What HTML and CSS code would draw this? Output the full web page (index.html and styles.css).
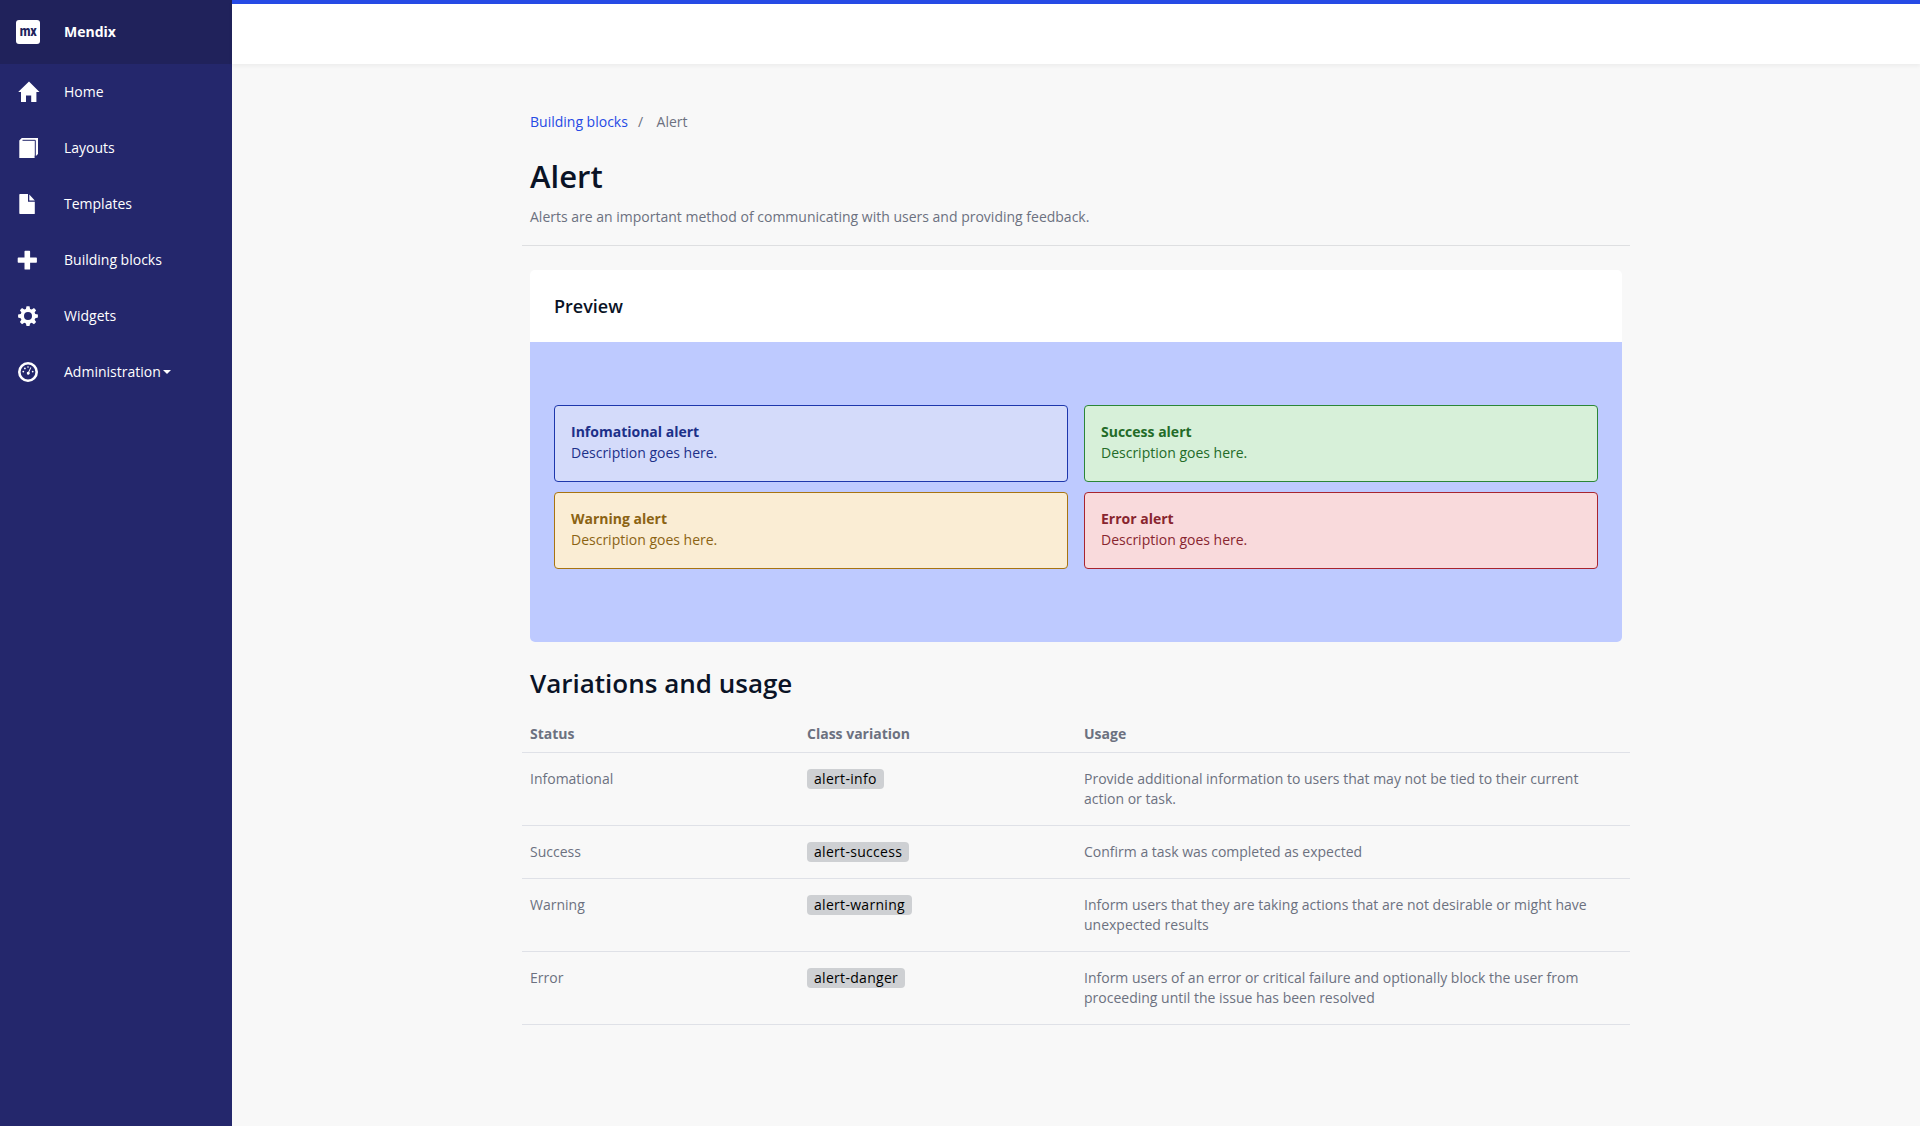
FILE: index.html
```html
<!DOCTYPE html>
<html lang="en">
<head>
<meta charset="utf-8">
<title>Alert</title>
<link rel="stylesheet" href="styles.css">
</head>
<body>
<div class="layout">
  <aside class="sidebar">
    <div class="brand">
      <span class="brand-logo">mx</span>
      <span class="brand-name">Mendix</span>
    </div>
    <nav class="nav">
      <a class="nav-item"><svg class="icon" viewBox="0 0 24 24"><path d="M13 1.400 2.200 12H5v10h5v-6.500h5.200V22h5.200V12h3.100z"/></svg><span>Home</span></a>
      <a class="nav-item"><svg class="icon" viewBox="0 0 24 24"><path d="M3.300 4.500 5.800 2H22v16l-1.800 1.800h-1.600V22H3.300z"/><path class="icon-line" d="M6.500 4.300h12.800v16"/></svg><span>Layouts</span></a>
      <a class="nav-item"><svg class="icon" viewBox="0 0 24 24"><path d="M4 2h8v7.800h6.800v11.600q0 .6-.6.600H4q-.7 0-.7-.7V2.700Q3.300 2 4 2z M13.300 2.500 18.800 8.500h-5.500z"/></svg><span>Templates</span></a>
      <a class="nav-item"><svg class="icon" viewBox="-.7 -.5 24 24"><path d="M8.500 2.300h4.200q.7 0 .7.700v6.100h6.100q.7 0 .7.700v3.800q0 .7-.7.700h-6.100v6.100q0 .7-.7.700H8.500q-.7 0-.7-.7v-6.100H1.700q-.7 0-.7-.7V9.800q0-.7.7-.7h6.100V3q0-.7.700-.7z"/></svg><span>Building blocks</span></a>
      <a class="nav-item"><svg class="icon" viewBox="0 0 24 24"><path fill-rule="evenodd" d="m10.500 2.300h3l.6 2.600 1.600.7 2.300-1.500 2.100 2.100-1.500 2.300.7 1.600 2.600.5v3l-2.600.6-.7 1.600 1.500 2.300-2.100 2.100-2.300-1.500-1.600.7-.6 2.600h-3l-.6-2.600-1.600-.7L6 20.200l-2.100-2.100 1.500-2.300-.7-1.600-2.600-.6v-3l2.600-.5.700-1.600-1.500-2.300L6 4.100l2.300 1.500 1.600-.7zM12 8.100a4 4 0 1 0 0 8 4 4 0 0 0 0-8z"/></svg><span>Widgets</span></a>
      <a class="nav-item"><svg class="icon" viewBox="0 0 24 24"><path fill-rule="evenodd" d="M12 2a10 10 0 1 0 0 20 10 10 0 0 0 0-20zm0 2.600a7.400 7.400 0 1 1 0 14.800 7.400 7.400 0 0 1 0-14.800z"/><path d="m14.500 7.200.8.400-2 4.500a1.500 1.500 0 1 1-1-.4z"/><circle cx="7.300" cy="11.600" r=".9"/><circle cx="8.900" cy="8.400" r=".9"/><circle cx="12" cy="7" r=".8"/><circle cx="16.700" cy="11.600" r=".9"/></svg><span>Administration</span><i class="caret"></i></a>
    </nav>
  </aside>
  <div class="main">
    <header class="topbar"></header>
    <main class="content">
      <div class="breadcrumb"><a class="crumb-link">Building blocks</a><span class="crumb-sep">/</span><span>Alert</span></div>
      <h1 class="title">Alert</h1>
      <p class="lead">Alerts are an important method of communicating with users and providing feedback.</p>
      <section class="card">
        <h3 class="card-title">Preview</h3>
        <div class="preview">
          <div class="alert alert-info"><strong>Infomational alert</strong><p>Description goes here.</p></div>
          <div class="alert alert-success"><strong>Success alert</strong><p>Description goes here.</p></div>
          <div class="alert alert-warning"><strong>Warning alert</strong><p>Description goes here.</p></div>
          <div class="alert alert-danger"><strong>Error alert</strong><p>Description goes here.</p></div>
        </div>
      </section>
      <h2 class="subtitle">Variations and usage</h2>
      <div class="table">
        <div class="row head"><span>Status</span><span>Class variation</span><span>Usage</span></div>
        <div class="row"><span>Infomational</span><span><code class="tag">alert-info</code></span><span>Provide additional information to users that may not be tied to their current action or task.</span></div>
        <div class="row"><span>Success</span><span><code class="tag">alert-success</code></span><span>Confirm a task was completed as expected</span></div>
        <div class="row"><span>Warning</span><span><code class="tag">alert-warning</code></span><span>Inform users that they are taking actions that are not desirable or might have unexpected results</span></div>
        <div class="row"><span>Error</span><span><code class="tag">alert-danger</code></span><span>Inform users of an error or critical failure and optionally block the user from proceeding until the issue has been resolved</span></div>
      </div>
    </main>
  </div>
</div>
</body>
</html>
```
FILE: styles.css
```css
* { box-sizing: border-box; }
body {
  margin: 0;
  background: #f8f8f8;
  color: #6c7180;
  font: 14px/20px "Open Sans", sans-serif;
}
h1, h2, h3, p { margin: 0; }
.layout { display: flex; min-height: 1126px; }

.sidebar { width: 232px; background: #24276c; color: #fff; }
.brand {
  display: flex;
  align-items: center;
  gap: 24px;
  height: 64px;
  padding-left: 16px;
  background: #20225b;
  font-weight: 700;
}
.brand-logo {
  width: 24px;
  height: 24px;
  border-radius: 3px;
  background: #fff;
  color: #20225b;
  font: 700 15px/21px "Open Sans", sans-serif;
  font-stretch: 75%;
  letter-spacing: -.4px;
  text-align: center;
}
.nav-item {
  display: flex;
  align-items: center;
  height: 56px;
  padding-left: 16px;
  font-weight: 400;
}
.icon { width: 24px; height: 24px; margin-right: 24px; fill: #fff; }
.icon-line { fill: none; stroke: #24276c; stroke-width: 1; }
.caret {
  margin-left: 2px;
  border: 4px solid transparent;
  border-top-color: #fff;
  border-bottom: 0;
}

.main { flex: 1; }
.topbar {
  height: 64px;
  border-top: 4px solid #264ae5;
  background: #fff;
  box-shadow: 0 2px 4px rgba(0, 0, 0, .05);
}
.content { width: 1108px; margin: 0 auto; padding-top: 48px; }
.breadcrumb { display: flex; padding: 0 8px; line-height: 20px; }
.crumb-link { color: #264ae5; }
.crumb-sep { padding: 0 13.5px 0 10px; }
.title, .subtitle { color: #0a1326; font-weight: 600; padding: 0 8px; }
.title { margin-top: 24px; font-size: 31px; line-height: 40px; }
.lead { padding: 11px 8px 18px; border-bottom: 1px solid #dedfe1; }
.card { margin: 24px 8px 0; border-radius: 5px; background: #fff; overflow: hidden; }
.card-title {
  padding: 24px;
  color: #0a1326;
  font-size: 18px;
  font-weight: 600;
  line-height: 24px;
}
.preview {
  display: grid;
  grid-template-columns: 1fr 1fr;
  gap: 10px 16px;
  height: 300px;
  padding: 63px 24px 73px;
  background: #becaff;
}
.alert { padding: 15px 16px; border: 1px solid; border-radius: 4px; line-height: 21px; }
.alert strong { display: block; }
.alert-info { background: #d4dbfa; border-color: #1d37ac; color: #1c3089; }
.alert-success { background: #d7f0d9; border-color: #2b8638; color: #236b28; }
.alert-warning { background: #faedd4; border-color: #a87410; color: #8b6313; }
.alert-danger { background: #f9dadc; border-color: #a8242f; color: #88252f; }

.subtitle { margin-top: 22px; font-size: 26px; line-height: 38px; }
.row {
  display: grid;
  grid-template-columns: 277px 277px 1fr;
  padding: 16px 0;
  border-bottom: 1px solid #dfe1e7;
}
.row > span { padding: 0 8px; }
.row.head { padding: 22px 0 8px; font-weight: 700; }
.tag {
  display: inline-block;
  padding: 0 7px;
  border-radius: 4px;
  background: #ced0d3;
  color: #000;
  font: 14px/20px "Open Sans", sans-serif;
  letter-spacing: .3px;
}
```
